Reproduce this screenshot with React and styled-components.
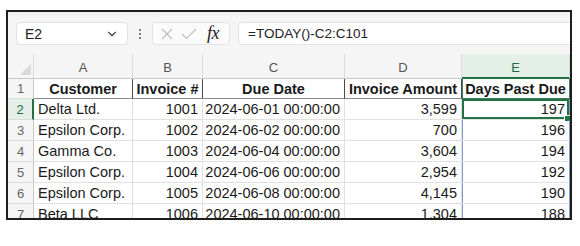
import React from "react";
import styled, {createGlobalStyle} from "styled-components";
import {ChevronDown} from "lucide-react";

const GlobalStyle = createGlobalStyle`
  html, body {
    margin: 0;
    padding: 0;
    background: #ffffff;
  }
  * {
    box-sizing: border-box;
  }
`;

const Frame = styled.div`
  margin: 10px 0 0 6px;
  width: 566px;
  height: 210px;
  border: 2px solid #1e1e1e;
  overflow: hidden;
  background: #f5f5f5;
  font-family: "Liberation Sans", Arial, sans-serif;
`;

const FormulaBar = styled.div`
  height: 42px;
  display: flex;
  align-items: flex-start;
  padding: 10px 0 0 8px;
  background: linear-gradient(#ebebeb 0, #f5f5f5 4px);
`;

const NameBox = styled.div`
  width: 112px;
  height: 23px;
  display: flex;
  align-items: center;
  justify-content: space-between;
  padding: 0 8px 0 8px;
  background: #ffffff;
  border: 1px solid #e2e2e2;
  border-radius: 4px;
  font-size: 14px;
  color: #222;
`;

const Kebab = styled.div`
  width: 24px;
  height: 23px;
  display: flex;
  flex-direction: column;
  align-items: center;
  justify-content: center;
  gap: 2px;

  span {
    width: 2px;
    height: 2px;
    border-radius: 1px;
    background: #555;
  }
`;

const FxGroup = styled.div`
  width: 78px;
  height: 23px;
  display: flex;
  align-items: center;
  gap: 8px;
  padding: 0 4px 0 8px;
  background: #fbfbfb;
  border: 1px solid #e2e2e2;
  border-radius: 4px;
`;

const FxLabel = styled.span`
  font-family: "Liberation Serif", "Times New Roman", serif;
  font-style: italic;
  font-size: 18px;
  color: #222;
  margin-left: 2px;
  letter-spacing: -0.5px;
`;

const FormulaInput = styled.div`
  flex: 1;
  height: 23px;
  margin-left: 8px;
  display: flex;
  align-items: center;
  padding-left: 9px;
  background: #ffffff;
  border: 1px solid #e2e2e2;
  border-right: none;
  border-radius: 4px 0 0 4px;
  font-size: 13.5px;
  color: #222;
`;

const Sheet = styled.div`
  display: grid;
  grid-template-columns: 26px 99px 70px 142px 117px 108px;
  grid-template-rows: 25px 20px repeat(6, 21px);
  background: #ffffff;
`;

const Corner = styled.div`
  position: relative;
  background: #f5f5f5;
  border-right: 1px solid #dcdcdc;
  border-bottom: 1px solid #c8c8c8;

  &::after {
    content: "";
    position: absolute;
    right: 2px;
    bottom: 3px;
    border-left: 11px solid transparent;
    border-bottom: 11px solid #dadada;
  }
`;

const ColHead = styled.div`
  display: flex;
  align-items: center;
  justify-content: center;
  padding-top: 3px;
  font-size: 13px;
  color: ${p => (p.$active ? "#1d6b3f" : "#555")};
  background: ${p => (p.$active ? "#e3efe7" : "#f5f5f5")};
  border-right: 1px solid #dcdcdc;
  border-bottom: ${p => (p.$active ? "2px solid #217346" : "1px solid #c8c8c8")};
`;

const RowHead = styled.div`
  display: flex;
  align-items: center;
  justify-content: center;
  font-size: 13px;
  color: ${p => (p.$active ? "#1d6b3f" : "#666")};
  background: ${p => (p.$active ? "#e3efe7" : "#f5f5f5")};
  border-right: ${p => (p.$active ? "2px solid #217346" : "1px solid #c8c8c8")};
  border-bottom: 1px solid #dcdcdc;
`;

const HeaderCell = styled.div`
  display: flex;
  align-items: center;
  justify-content: center;
  font-size: 14.5px;
  font-weight: 700;
  color: #1a1a1a;
  white-space: nowrap;
  overflow: hidden;
  border-right: 1px solid ${p => (p.$last ? "#3f7a5a" : "#4a4a4a")};
  border-bottom: 1px solid ${p => (p.$last ? "#3f7a5a" : "#8a8a8a")};
  ${p => p.$last && "box-shadow: inset 1px 0 0 #3f7a5a;"}
`;

const Cell = styled.div`
  position: relative;
  display: flex;
  align-items: center;
  justify-content: ${p => (p.$align === "left" ? "flex-start" : "flex-end")};
  padding: 0 4px;
  font-size: 14.5px;
  color: #1a1a1a;
  white-space: nowrap;
  border-right: 1px solid ${p => (p.$blue ? "#7f9bc9" : "#e1e1e1")};
  border-bottom: 1px solid #e1e1e1;
  ${p => p.$blueLeft && "box-shadow: inset 1px 0 0 #7f9bc9;"}
  ${p =>
    p.$selected &&
    `
    box-shadow: inset 0 0 0 2px #217346;
    &::after {
      content: "";
      position: absolute;
      right: -2px;
      bottom: -3px;
      width: 5px;
      height: 5px;
      background: #217346;
      border: 1px solid #ffffff;
    }
  `}
`;

const columns = ["A", "B", "C", "D", "E"];
const headers = ["Customer", "Invoice #", "Due Date", "Invoice Amount", "Days Past Due"];

const rows = [
    ["Delta Ltd.", "1001", "2024-06-01 00:00:00", "3,599", "197"],
    ["Epsilon Corp.", "1002", "2024-06-02 00:00:00", "700", "196"],
    ["Gamma Co.", "1003", "2024-06-04 00:00:00", "3,604", "194"],
    ["Epsilon Corp.", "1004", "2024-06-06 00:00:00", "2,954", "192"],
    ["Epsilon Corp.", "1005", "2024-06-08 00:00:00", "4,145", "190"],
    ["Beta LLC", "1006", "2024-06-10 00:00:00", "1,304", "188"],
];

const CrossIcon = () => (
    <svg width="12" height="12" viewBox="0 0 12 12">
        <path d="M1 1 L11 11 M11 1 L1 11" stroke="#bdbdbd" strokeWidth="1.1" fill="none" />
    </svg>
);

const CheckIcon = () => (
    <svg width="16" height="12" viewBox="0 0 16 12">
        <path d="M1 6 L5.5 10.5 L15 1" stroke="#bdbdbd" strokeWidth="1.1" fill="none" />
    </svg>
);

const App = () => {
    return (
        <>
            <GlobalStyle />
            <Frame>
                <FormulaBar>
                    <NameBox>
                        <span>E2</span>
                        <ChevronDown size={14} color="#444" strokeWidth={2} />
                    </NameBox>
                    <Kebab>
                        <span /><span /><span />
                    </Kebab>
                    <FxGroup>
                        <CrossIcon />
                        <CheckIcon />
                        <FxLabel>fx</FxLabel>
                    </FxGroup>
                    <FormulaInput>=TODAY()-C2:C101</FormulaInput>
                </FormulaBar>
                <Sheet>
                    <Corner />
                    {columns.map(c => (
                        <ColHead key={c} $active={c === "E"}>{c}</ColHead>
                    ))}

                    <RowHead>1</RowHead>
                    {headers.map((h, i) => (
                        <HeaderCell key={h} $last={i === headers.length - 1}>{h}</HeaderCell>
                    ))}

                    {rows.map((r, ri) => (
                        <React.Fragment key={ri}>
                            <RowHead $active={ri === 0}>{ri + 2}</RowHead>
                            {r.map((v, ci) => (
                                <Cell
                                    key={ci}
                                    $align={ci === 0 ? "left" : "right"}
                                    $blue={ci === 4}
                                    $blueLeft={ci === 4}
                                    $selected={ri === 0 && ci === 4}
                                >
                                    {v}
                                </Cell>
                            ))}
                        </React.Fragment>
                    ))}
                </Sheet>
            </Frame>
        </>
    );
};

export default App;
